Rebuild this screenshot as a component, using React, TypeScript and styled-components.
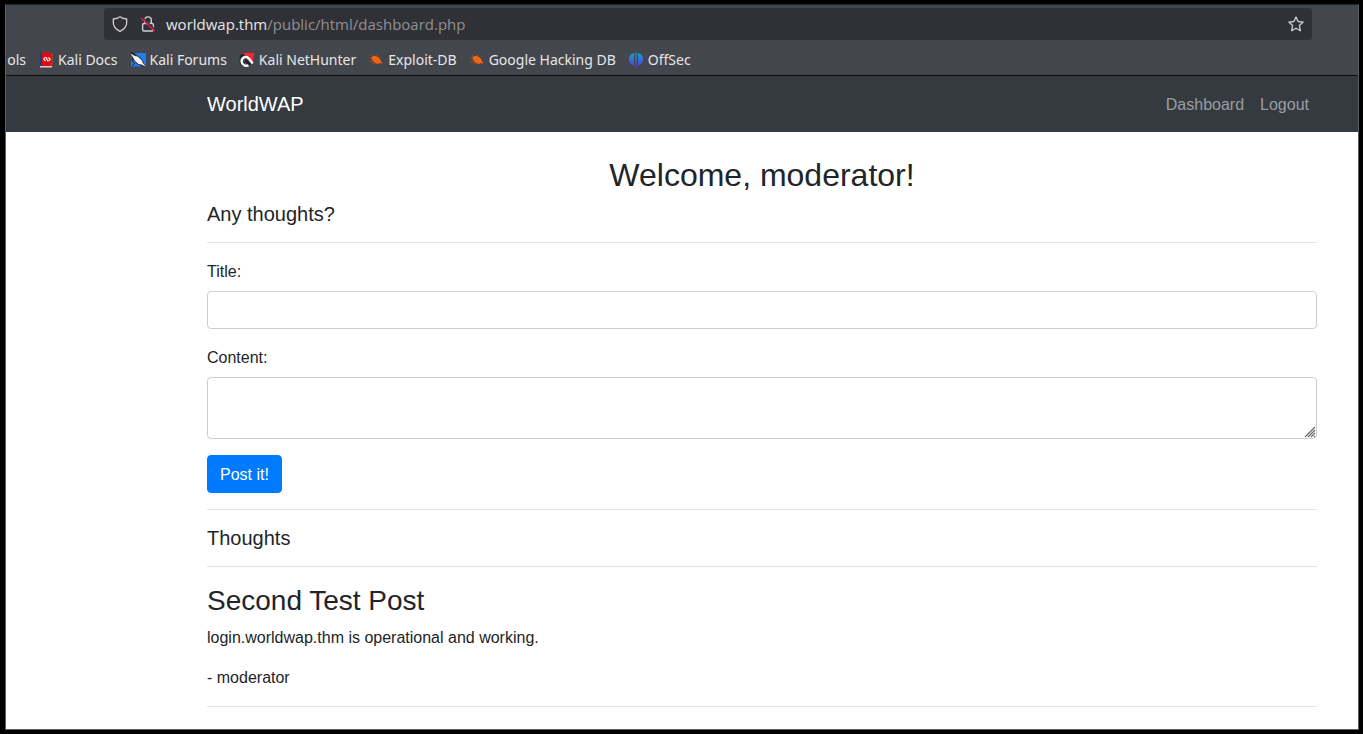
import React from "react";
import styled, { createGlobalStyle } from "styled-components";

const GlobalStyle = createGlobalStyle`
  *, *::before, *::after { box-sizing: border-box; }
  body {
    margin: 0;
    background: #000;
    color: #212529;
    font: 16px/24px "Liberation Sans", Arial, sans-serif;
  }
`;

const Frame = styled.div`
  min-height: 100vh;
  padding: 4px 4px 4px 5px;
  display: flex;
`;

const Window = styled.div`
  flex: 1;
  min-width: 0;
  display: flex;
  flex-direction: column;
  background: #fff;
  border: 1px solid #5c5e60;
  border-top-color: #26272b;
`;

const Chrome = styled.header`
  background: #43464d;
  border-bottom: 1px solid #0c0c0e;
  color: #e6e6e8;
  font: 14px/20px "Noto Sans", sans-serif;
`;

const AddressRow = styled.div`
  padding: 3px 46px 4px 98px;
`;

const AddressBar = styled.div`
  height: 32px;
  padding: 0 8px;
  display: flex;
  align-items: center;
  gap: 10px;
  background: #303136;
  border-radius: 4px;
`;

const SiteIcons = styled.div`
  display: flex;
  gap: 12px;
`;

const Url = styled.span`
  flex: 1;
  color: #8f9094;
  font: 15px/20px "Open Sans", "Noto Sans", sans-serif;
`;

const Host = styled.span`
  color: #e6e6e8;
`;

const IconButton = styled.button`
  display: flex;
  padding: 0;
  border: 0;
  background: none;
  color: #d0d0d2;
`;

const Bookmarks = styled.nav`
  height: 31px;
  display: flex;
  align-items: center;
  gap: 12px;
  overflow: hidden;
  white-space: nowrap;
`;

const Bookmark = styled.a`
  display: flex;
  align-items: center;
  gap: 4px;
  color: inherit;
  text-decoration: none;
`;

const CutBookmark = styled(Bookmark)`
  width: 20px;
  justify-content: flex-end;
`;

const Navbar = styled.nav`
  height: 56px;
  padding: 0 41px 0 201px;
  display: flex;
  align-items: center;
  justify-content: space-between;
  background: #343a40;
`;

const Brand = styled.a`
  color: #fff;
  font-size: 20px;
  line-height: 30px;
  text-decoration: none;
`;

const NavLinks = styled.div`
  display: flex;
  gap: 16px;
  padding: 2px 8px 0 0;
`;

const NavLink = styled.a`
  color: #9a9da0;
  text-decoration: none;
`;

const Content = styled.main`
  padding: 24px 41px 0 201px;
`;

const PageTitle = styled.h2`
  margin: 0 0 8px;
  font-size: 32px;
  line-height: 38px;
  font-weight: 400;
  text-align: center;
`;

const SectionTitle = styled.h5`
  margin: 0;
  font-size: 20px;
  line-height: 24px;
  font-weight: 400;
`;

const Rule = styled.hr`
  margin: 16px 0;
  border: 0;
  border-top: 1px solid #e3e3e3;
`;

const Field = styled.div`
  margin-bottom: 16px;
`;

const Label = styled.label`
  display: block;
  margin-bottom: 6px;
  line-height: 26px;
`;

const TextInput = styled.input`
  display: block;
  width: 100%;
  height: 38px;
  padding: 6px 12px;
  border: 1px solid #ccced0;
  border-radius: 4px;
  font: inherit;
  color: #495057;
`;

const AreaWrap = styled.div`
  position: relative;
`;

const TextArea = styled.textarea`
  display: block;
  width: 100%;
  height: 62px;
  padding: 6px 12px;
  border: 1px solid #ccced0;
  border-radius: 4px;
  font: inherit;
  color: #495057;
  resize: none;
`;

const Grip = styled.svg`
  position: absolute;
  right: 1px;
  bottom: 1px;
  pointer-events: none;
`;

const PostButton = styled.button`
  display: block;
  height: 38px;
  padding: 7px 12px 5px;
  border: 1px solid #007bff;
  border-radius: 4px;
  background: #007bff;
  color: #fff;
  font: inherit;
`;

const PostTitle = styled.h3`
  margin: 0 0 7px;
  font-size: 28px;
  line-height: 36px;
  font-weight: 400;
`;

const PostText = styled.p`
  margin: 0 0 16px;
`;

const ShieldIcon = () => (
  <svg width="16" height="16" viewBox="0 0 16 16" fill="none" stroke="#d0d0d2" strokeWidth="1.3" strokeLinejoin="round">
    <path d="M8 .8C6 2.2 3.600 2.900 1.300 3v3.600c0 4 2.600 7 6.700 8.700 4.100-1.700 6.700-4.700 6.700-8.700V3C12.400 2.900 10 2.200 8 .8z" />
  </svg>
);

const LockIcon = () => (
  <svg width="16" height="16" viewBox="0 0 16 16" fill="none" stroke="#d0d0d2" strokeWidth="1.4">
    <path d="M4.700 7.500V4.200a3.300 3.300 0 0 1 6.600 0v3.300" />
    <rect x="2.600" y="7.500" width="10.800" height="7.500" rx="1.500" />
    <path d="M2.300 1.300 15.600 14" stroke="#303136" strokeWidth="1.400" />
    <path d="M1 2 14.500 15" stroke="#e01b4f" strokeWidth="1.500" />
  </svg>
);

const StarIcon = () => (
  <svg width="16" height="16" viewBox="0 0 16 16" fill="none" stroke="currentColor" strokeWidth="1.300" strokeLinejoin="round">
    <path d="M8 .9l2.100 4.600 5.100.6-3.800 3.400 1 5.300L8 12.300l-4.400 2.500 1-5.300L.8 6.100l5.100-.6z" />
  </svg>
);

const DocsIcon = () => (
  <svg width="16" height="16" viewBox="0 0 16 16">
    <path d="M2 .5h12V14H2z" fill="#dc0d12" />
    <path d="M2 .5h2V14H2z" fill="#14407f" />
    <path d="M14 1v13" stroke="#a85420" />
    <path d="M2 14h12v1.500H2z" fill="#d8cccc" />
    <path d="M7.500 5.200 5.800 7.200l1.700 1.800M10.500 5.500l1.700 1.800-1.700 1.900M8.200 5.200l1.600 4" fill="none" stroke="#fff" strokeWidth="1.100" />
  </svg>
);

const ForumsIcon = () => (
  <svg width="16" height="16" viewBox="0 0 16 16">
    <path d="M1 1h15v13.500H1z" fill="#1f7df2" />
    <path d="M0 0h3l4 3.500 4 2.500 5 9h-3L7 12 2 7z" fill="#252c36" />
    <path d="M.3 1.500 5 4l2.500.5L11.500 8l1 2.500 3 4.300-4-2.300-3-.5L5 9 3.500 6z" fill="#f7f7f7" />
    <path d="m1 7 3 4M2 14l3-3" stroke="#18233a" />
  </svg>
);

const NetHunterIcon = () => (
  <svg width="16" height="16" viewBox="0 0 16 16">
    <path d="M2.500 1h13l-2 9L9 6z" fill="#f72635" />
    <path d="M1 3 4 1.500 7 4 4 8l2 5-3 1.500L.5 10z" fill="#24252a" />
    <path d="M9.500 13.300C6 14.500 2.800 12.500 2.600 9.500 2.500 6 5.500 4.200 8 5.200c2.500 1 3.500 3.500 5.700 6.300" fill="none" stroke="#fff" strokeWidth="2.400" />
    <path d="M6 8.500c2 0 2.500 3 5.500 4" fill="none" stroke="#1c1c20" strokeWidth="1.800" />
  </svg>
);

const ExploitIcon = () => (
  <svg width="16" height="16" viewBox="0 0 16 16">
    <path d="M3.200 6 4.500 4.200 7.500 3.800 11 5.500 13.300 9.300 14.500 11.500 12 11 10 12 6.500 10.800 4.500 8.800z" fill="#f06413" />
    <path d="m.8 5.500 3 1.200M1.300 9.500l4-.5M3.500 12.200l4-1.200M5 4.500 3 3M8 4l1.500-1M11.500 6.500l1-1.700" fill="none" stroke="#a84b1c" strokeWidth=".9" />
  </svg>
);

const OffSecIcon = () => (
  <svg width="16" height="16" viewBox="0 0 16 16">
    <defs>
      <linearGradient id="offsec" gradientUnits="userSpaceOnUse" x1="0" y1="0" x2="0" y2="16">
        <stop offset="0" stopColor="#0fb0c0" />
        <stop offset="1" stopColor="#5f2ae0" />
      </linearGradient>
    </defs>
    <path d="M6 1v12.500C2.300 12.500.8 10 .8 7.200S2.300 2 6 1zM10 1v12.500c3.700-1 5.200-3.500 5.200-6.300S13.700 2 10 1zM7.300.5h1.400V15.500H7.300z" fill="url(#offsec)" />
  </svg>
);

const bookmarks = [
  { label: "Kali Docs", Icon: DocsIcon },
  { label: "Kali Forums", Icon: ForumsIcon },
  { label: "Kali NetHunter", Icon: NetHunterIcon },
  { label: "Exploit-DB", Icon: ExploitIcon },
  { label: "Google Hacking DB", Icon: ExploitIcon },
  { label: "OffSec", Icon: OffSecIcon },
];

export default function App() {
  return (
    <>
      <GlobalStyle />
      <Frame>
        <Window>
          <Chrome>
            <AddressRow>
              <AddressBar>
                <SiteIcons>
                  <ShieldIcon />
                  <LockIcon />
                </SiteIcons>
                <Url>
                  <Host>worldwap.thm</Host>/public/html/dashboard.php
                </Url>
                <IconButton type="button" aria-label="Bookmark this page">
                  <StarIcon />
                </IconButton>
              </AddressBar>
            </AddressRow>
            <Bookmarks aria-label="Bookmarks">
              <CutBookmark href="#">ols</CutBookmark>
              {bookmarks.map(({ label, Icon }) => (
                <Bookmark href="#" key={label}>
                  <Icon />
                  {label}
                </Bookmark>
              ))}
            </Bookmarks>
          </Chrome>
          <Navbar>
            <Brand href="#">WorldWAP</Brand>
            <NavLinks>
              <NavLink href="#">Dashboard</NavLink>
              <NavLink href="#">Logout</NavLink>
            </NavLinks>
          </Navbar>
          <Content>
            <PageTitle>Welcome, moderator!</PageTitle>
            <SectionTitle>Any thoughts?</SectionTitle>
            <Rule />
            <form onSubmit={(e) => e.preventDefault()}>
              <Field>
                <Label htmlFor="title">Title:</Label>
                <TextInput id="title" type="text" />
              </Field>
              <Field>
                <Label htmlFor="content">Content:</Label>
                <AreaWrap>
                  <TextArea id="content" />
                  <Grip width="12" height="12" viewBox="0 0 12 12" stroke="#66686a" strokeWidth="1.200" aria-hidden="true">
                    <path d="M1 11 11 1M4 11l7-7M7 11l4-4M10 11l1-1" />
                  </Grip>
                </AreaWrap>
              </Field>
              <PostButton type="submit">Post it!</PostButton>
            </form>
            <Rule />
            <SectionTitle>Thoughts</SectionTitle>
            <Rule />
            <article>
              <PostTitle>Second Test Post</PostTitle>
              <PostText>login.worldwap.thm is operational and working.</PostText>
              <PostText>- moderator</PostText>
            </article>
            <Rule />
          </Content>
        </Window>
      </Frame>
    </>
  );
}
